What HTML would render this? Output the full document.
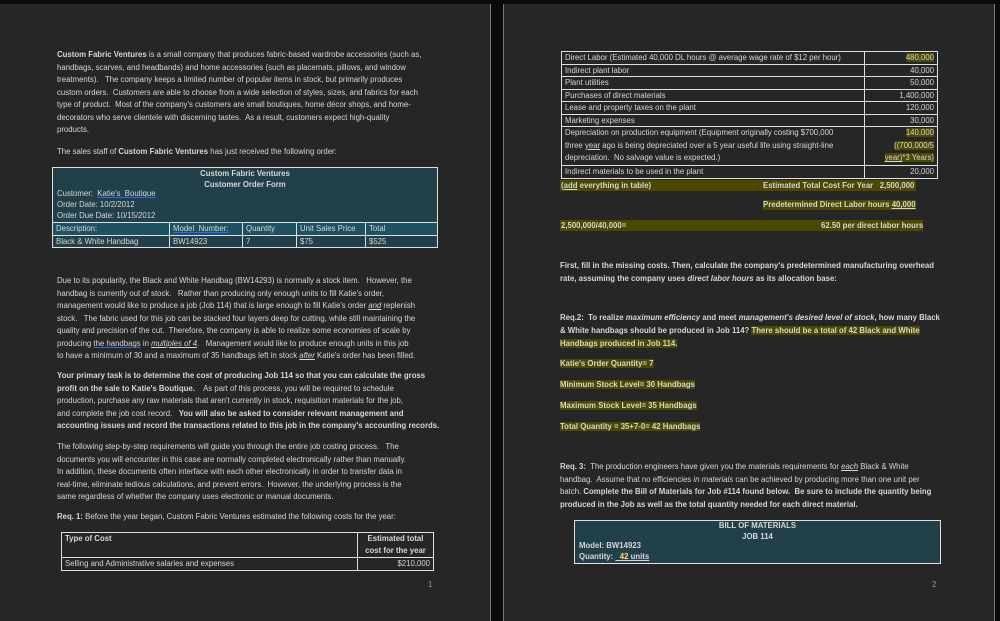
<!DOCTYPE html>
<html><head><meta charset="utf-8"><style>
*{margin:0;padding:0;box-sizing:border-box}
body{width:1000px;height:621px;background:#0a0a0a;position:relative;overflow:hidden;font-family:"Liberation Sans",Arial,sans-serif;font-size:7.8px;color:#d6d6d6}
.pg{position:absolute;top:4px;height:617px;background:#262626}
.l{position:absolute;white-space:nowrap;line-height:10px}
b{font-weight:bold}
.hl{background:#4b4800}
.u{text-decoration:underline}
.box{position:absolute;border:1px solid #e0e0e0}
table{border-collapse:collapse;position:absolute;table-layout:fixed}
td{border:1px solid #e0e0e0;padding:0 3px;white-space:nowrap;line-height:11.5px;vertical-align:top;overflow:hidden}
</style></head><body>
<div class="pg" style="left:0;width:491px;border-right:1px solid #777"></div>
<div class="pg" style="left:503px;width:492px;border-left:1px solid #777;border-right:1px solid #777"></div>

<!-- Page 1 -->
<div class="l" style="left:57px;top:50px"><b>Custom Fabric Ventures</b> is a small company that produces fabric-based wardrobe accessories (such as,</div>
<div class="l" style="left:57px;top:63px">handbags, scarves, and headbands) and home accessories (such as placemats, pillows, and window</div>
<div class="l" style="left:57px;top:75px">treatments).&nbsp;&nbsp; The company keeps a limited number of popular items in stock, but primarily produces</div>
<div class="l" style="left:57px;top:88px">custom orders.&nbsp; Customers are able to choose from a wide selection of styles, sizes, and fabrics for each</div>
<div class="l" style="left:57px;top:100px">type of product.&nbsp; Most of the company's customers are small boutiques, home décor shops, and home-</div>
<div class="l" style="left:57px;top:113px">decorators who serve clientele with discerning tastes.&nbsp; As a result, customers expect high-quality</div>
<div class="l" style="left:57px;top:125px">products.</div>
<div class="l" style="left:57px;top:147px">The sales staff of <b>Custom Fabric Ventures</b> has just received the following order:</div>

<div class="box" style="left:52px;top:167px;width:386px;height:78px;background:#22404a"></div>
<div class="l" style="left:52px;width:386px;text-align:center;top:169px"><b>Custom Fabric Ventures</b></div>
<div class="l" style="left:52px;width:386px;text-align:center;top:180px"><b>Customer Order Form</b></div>
<div class="l" style="left:57px;top:189px">Customer:&nbsp; <span class="u" style="text-decoration-color:#36f">Katie's&nbsp; Boutique</span></div>
<div class="l" style="left:57px;top:200px">Order Date: 10/2/2012</div>
<div class="l" style="left:57px;top:211px">Order Due Date: 10/15/2012</div>
<table style="left:52px;top:222px;width:386px;background:#22404a">
<tr style="background:#1e5261"><td style="width:117px">Description:</td><td style="width:73px"><span class="u" style="text-decoration-color:#36f">Model&nbsp; Number:</span></td><td style="width:54px">Quantity</td><td style="width:69px">Unit Sales Price</td><td>Total</td></tr>
<tr><td>Black &amp; White Handbag</td><td>BW14923</td><td>7</td><td>$75</td><td>$525</td></tr>
</table>

<div class="l" style="left:57px;top:276px">Due to its popularity, the Black and White Handbag (BW14293) is normally a stock item.&nbsp;&nbsp; However, the</div>
<div class="l" style="left:57px;top:289px">handbag is currently out of stock.&nbsp;&nbsp; Rather than producing only enough units to fill Katie's order,</div>
<div class="l" style="left:57px;top:301px">management would like to produce a job (Job 114) that is large enough to fill Katie's order <i class="u">and</i> replenish</div>
<div class="l" style="left:57px;top:314px">stock.&nbsp;&nbsp; The fabric used for this job can be stacked four layers deep for cutting, while still maintaining the</div>
<div class="l" style="left:57px;top:326px">quality and precision of the cut.&nbsp; Therefore, the company is able to realize some economies of scale by</div>
<div class="l" style="left:57px;top:339px">producing <span class="u" style="text-decoration-color:#36f">the handbags</span> in <i class="u">multiples of 4</i>.&nbsp;&nbsp; Management would like to produce enough units in this job</div>
<div class="l" style="left:57px;top:351px">to have a minimum of 30 and a maximum of 35 handbags left in stock <i class="u">after</i> Katie's order has been filled.</div>
<div class="l" style="left:57px;top:371px"><b>Your primary task is to determine the cost of producing Job 114 so that you can calculate the gross</b></div>
<div class="l" style="left:57px;top:384px"><b>profit on the sale to Katie's Boutique.</b>&nbsp;&nbsp;&nbsp; As part of this process, you will be required to schedule</div>
<div class="l" style="left:57px;top:396px">production, purchase any raw materials that aren't currently in stock, requisition materials for the job,</div>
<div class="l" style="left:57px;top:409px">and complete the job cost record.&nbsp;&nbsp; <b>You will also be asked to consider relevant management and</b></div>
<div class="l" style="left:57px;top:421px"><b>accounting issues and record the transactions related to this job in the company's accounting records.</b></div>
<div class="l" style="left:57px;top:442px">The following step-by-step requirements will guide you through the entire job costing process.&nbsp;&nbsp; The</div>
<div class="l" style="left:57px;top:455px">documents you will encounter in this case are normally completed electronically rather than manually.</div>
<div class="l" style="left:57px;top:467px">In addition, these documents often interface with each other electronically in order to transfer data in</div>
<div class="l" style="left:57px;top:480px">real-time, eliminate tedious calculations, and prevent errors.&nbsp; However, the underlying process is the</div>
<div class="l" style="left:57px;top:492px">same regardless of whether the company uses electronic or manual documents.</div>
<div class="l" style="left:57px;top:512px"><b>Req. 1:</b> Before the year began, Custom Fabric Ventures estimated the following costs for the year:</div>
<table style="left:61px;top:532px;width:373px">
<tr><td style="width:296px;height:24px"><b>Type of Cost</b></td><td style="text-align:center;line-height:12px;padding:0"><b>Estimated total<br>cost for the year</b></td></tr>
<tr><td>Selling and Administrative salaries and expenses</td><td style="text-align:right">$210,000</td></tr>
</table>
<div class="l" style="left:428px;top:580px;color:#999">1</div>

<!-- Page 2 -->
<table style="left:561px;top:51px;width:377px">
<tr><td style="width:303px">Direct Labor (Estimated 40,000 DL hours @ average wage rate of $12 per hour)</td><td style="text-align:right"><span class="hl">480,000</span></td></tr>
<tr><td>Indirect plant labor</td><td style="text-align:right">40,000</td></tr>
<tr><td>Plant utilities</td><td style="text-align:right">50,000</td></tr>
<tr><td>Purchases of direct materials</td><td style="text-align:right">1,400,000</td></tr>
<tr><td>Lease and property taxes on the plant</td><td style="text-align:right">120,000</td></tr>
<tr><td>Marketing expenses</td><td style="text-align:right">30,000</td></tr>
<tr><td style="line-height:12.7px">Depreciation on production equipment (Equipment originally costing $700,000<br>three <span class="u">year</span> ago is being depreciated over a 5 year useful life using straight-line<br>depreciation.&nbsp; No salvage value is expected.)</td><td style="text-align:right;line-height:12.7px"><span class="hl">140,000<br>((700,000/5<br><span class="u">year)</span>*3 Years)</span></td></tr>
<tr><td>Indirect materials to be used in the plant</td><td style="text-align:right">20,000</td></tr>
</table>
<div class="hl" style="position:absolute;left:560px;top:180px;width:356px;height:11px"></div>
<div class="l" style="left:561px;top:181px"><b>(<span class="u">add</span> everything in table)</b></div>
<div class="l" style="left:763px;top:181px"><b>Estimated Total Cost For Year&nbsp;&nbsp; 2,500,000</b></div>
<div class="l hl" style="left:763px;top:200px"><b>Predetermined Direct Labor hours <span class="u">40,000</span></b></div>
<div class="hl" style="position:absolute;left:560px;top:220px;width:363px;height:11px"></div>
<div class="l" style="left:561px;top:221px"><b>2,500,000/40,000=</b></div>
<div class="l" style="left:821px;top:221px"><b>62.50 per direct labor hours</b></div>

<div class="l" style="left:560px;top:261px"><b>First, fill in the missing costs. Then, calculate the company's predetermined manufacturing overhead</b></div>
<div class="l" style="left:560px;top:274px"><b>rate, assuming the company uses <i>direct labor hours</i> as its allocation base:</b></div>
<div class="l" style="left:560px;top:313px"><b>Req.2:&nbsp; To realize <i>maximum efficiency</i> and meet <i>management's desired level of stock</i>, how many Black</b></div>
<div class="l" style="left:560px;top:326px"><b>&amp; White handbags should be produced in Job 114? <span class="hl">There should be a total of 42 Black and White</span></b></div>
<div class="l" style="left:560px;top:339px"><b class="hl">Handbags produced in Job 114.</b></div>
<div class="l" style="left:560px;top:359px"><b class="hl">Katie's Order Quantity= 7</b></div>
<div class="l" style="left:560px;top:380px"><b class="hl">Minimum Stock Level= 30 Handbags</b></div>
<div class="l" style="left:560px;top:401px"><b class="hl">Maximum Stock Level= 35 Handbags</b></div>
<div class="l" style="left:560px;top:422px"><b class="hl">Total Quantity = 35+7-0= 42 Handbags</b></div>
<div class="l" style="left:560px;top:462px"><b>Req. 3:</b>&nbsp; The production engineers have given you the materials requirements for <i class="u">each</i> Black &amp; White</div>
<div class="l" style="left:560px;top:475px">handbag.&nbsp; Assume that no efficiencies <i>in materials</i> can be achieved by producing more than one unit per</div>
<div class="l" style="left:560px;top:487px">batch. <b>Complete the Bill of Materials for Job #114 found below.&nbsp; Be sure to include the quantity being</b></div>
<div class="l" style="left:560px;top:500px"><b>produced in the Job as well as the total quantity needed for each direct material.</b></div>
<div class="box" style="left:574px;top:520px;width:367px;height:44px;background:#22404a"></div>
<div class="l" style="left:574px;width:367px;text-align:center;top:521px"><b>BILL OF MATERIALS</b></div>
<div class="l" style="left:574px;width:367px;text-align:center;top:532px"><b>JOB 114</b></div>
<div class="l" style="left:579px;top:541px"><b>Model: BW14923</b></div>
<div class="l" style="left:579px;top:552px"><b>Quantity: <span class="u">&nbsp; <span class="hl">42</span> units</span></b></div>
<div class="l" style="left:932px;top:580px;color:#999">2</div>
</body></html>
